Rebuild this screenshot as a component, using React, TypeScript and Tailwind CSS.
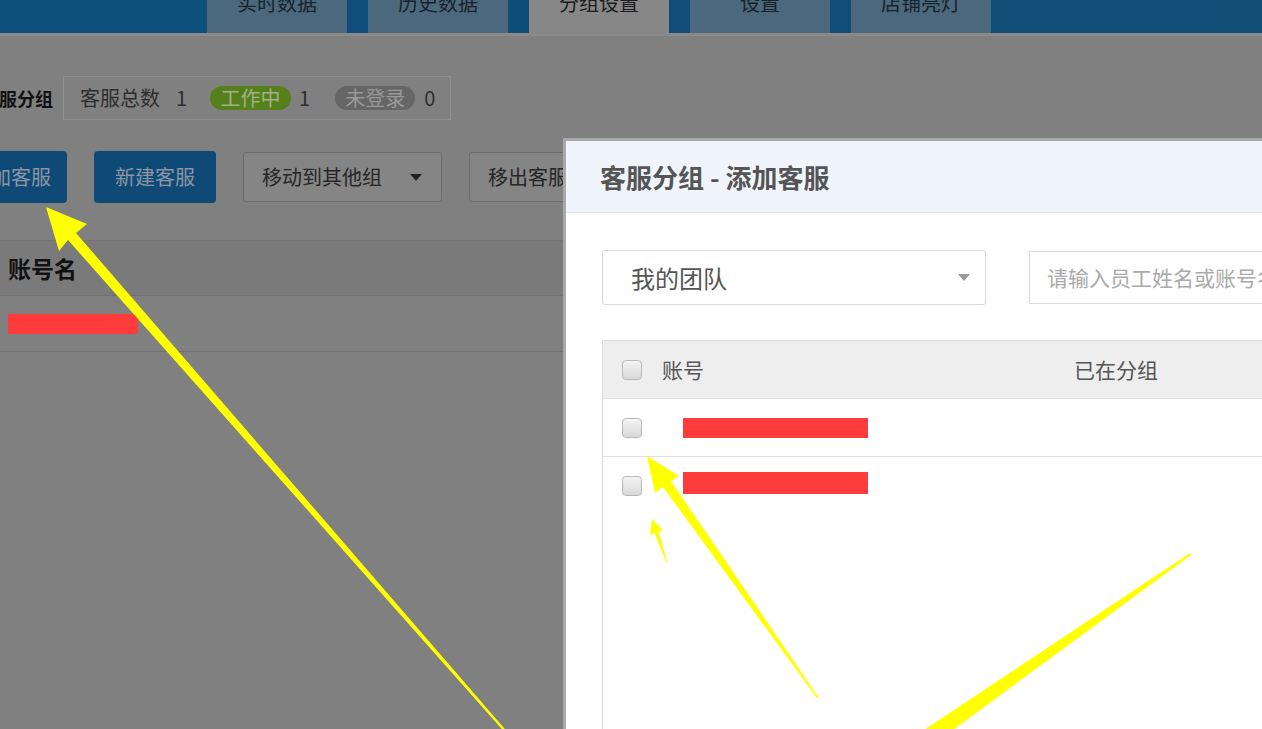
import type { ReactNode } from 'react';

const tabs = ['实时数据', '历史数据', '分组设置', '设置', '店铺亮灯'];

function Checkbox() {
  return (
    <span className="block w-[20px] h-[20px] rounded-[4px] border border-[#b9b9b9] bg-gradient-to-b from-[#f4f4f4] to-[#d9d9d9] shrink-0" />
  );
}

function Redact({ w, h }: { w: number; h: number }) {
  return <span className="block bg-[#ff3b3b]" style={{ width: w, height: h }} />;
}

function Badge({ children, tone }: { children: ReactNode; tone: 'green' | 'gray' }) {
  return (
    <span
      className={
        tone === 'green'
          ? 'inline-flex items-center justify-center w-[81px] h-[24px] rounded-full bg-[#56801c] text-[#9fb286]'
          : 'inline-flex items-center justify-center w-[80px] h-[24px] rounded-full bg-[#666666] text-[#999999]'
      }
    >
      {children}
    </span>
  );
}

function Arrows() {
  return (
    <svg className="absolute inset-0 pointer-events-none" width="1262" height="729" viewBox="0 0 1262 729">
      <g fill="#ffff00">
        {/* big arrow pointing at 添加客服 */}
        <polygon points="46,207 87,224 76,233 510,735 508,736 68,240 59,251" />
        {/* arrow pointing at first checkbox */}
        <polygon points="647,456 679,476 671,481 819,698 817,698 663,487 655,493" />
        {/* small arrow */}
        <polygon points="652,519 663,530 658.5,531.5 667.5,563 666.5,563 654.5,533 650,535" />
        {/* arrow from lower right */}
        <polygon points="1190,553 1191,555 942,738 912,738" />
      </g>
    </svg>
  );
}

export default function App() {
  return (
    <div className="relative w-[1262px] h-[729px] overflow-hidden bg-[#808080] font-['Noto_Sans_CJK_SC','Noto_Sans',sans-serif]">
      {/* top nav, scrolled so only the lower part shows */}
      <div className="h-[60px] -mt-[27px] flex bg-gradient-to-r from-[#0d4e7c] to-[#124d76]">
        <div className="w-[207px] shrink-0" />
        <div className="flex gap-[21px]">
          {tabs.map((t, i) => (
            <div
              key={t}
              className={
                i === 2
                  ? 'w-[140px] h-full flex items-center justify-center bg-[#878787] text-[20px] text-[#1c1c1c]'
                  : 'w-[140px] h-full flex items-center justify-center bg-[#4b687d] text-[20px] text-[#18222c]'
              }
            >
              {t}
            </div>
          ))}
        </div>
      </div>
      <div className="h-[3px] bg-[#8a8a8a]" />

      {/* background page */}
      <div className="-ml-[19px]">
        <div className="mt-[40px] flex items-center h-[44px]">
          <span className="text-[18px] font-bold text-[#111] w-[82px]">客服分组</span>
          <div className="h-[44px] w-[388px] border border-[#8f8f8f] flex items-center pl-[16px] text-[20px] text-[#2e2e2e]">
            <span>客服总数</span>
            <span className="ml-[16px]">1</span>
            <span className="ml-[23px]">
              <Badge tone="green">工作中</Badge>
            </span>
            <span className="ml-[8px]">1</span>
            <span className="ml-[25px]">
              <Badge tone="gray">未登录</Badge>
            </span>
            <span className="ml-[9px]">0</span>
          </div>
        </div>

        <div className="mt-[31px] flex items-center h-[52px] gap-[27px]">
          <div className="h-[52px] w-[86px] rounded-[4px] bg-[#0f4a77] flex items-center justify-end pr-[16px] text-[20px] text-[#8a96a2]">
            加客服
          </div>
          <div className="h-[52px] w-[122px] rounded-[4px] bg-[#0f4a77] flex items-center justify-center text-[20px] text-[#8a96a2]">
            新建客服
          </div>
          <div className="h-[50px] w-[199px] rounded-[3px] border border-[#6c6c6c] bg-[#858585] flex items-center pl-[18px] gap-[28px] text-[20px] text-[#262626]">
            移动到其他组
            <span className="w-0 h-0 border-l-[6px] border-r-[6px] border-t-[7px] border-l-transparent border-r-transparent border-t-[#222]" />
          </div>
          <div className="h-[50px] w-[140px] rounded-[3px] border border-[#6c6c6c] bg-[#858585] flex items-center pl-[18px] text-[20px] text-[#262626]">
            移出客服
          </div>
        </div>

        <div className="mt-[37px] w-[600px]">
          <div className="h-[55px] bg-[#7a7a7a] border-t border-[#747474] flex items-center pl-[27px] text-[23px] font-bold text-[#111]">
            账号名
          </div>
          <div className="h-[57px] border-t border-b border-[#707070] flex items-center pl-[27px]">
            <Redact w={130} h={20} />
          </div>
        </div>
      </div>

      {/* modal */}
      <div className="absolute left-[563px] top-[138px] w-[720px] h-[620px] bg-white border-l-[3px] border-t-[3px] border-[#a9a9a9]">
        <div className="h-[72px] bg-[#f0f5fc] border-b border-[#e2e6ec] flex items-center pl-[34px] text-[26px] font-bold text-[#555]">
          客服分组 - 添加客服
        </div>
        <div className="pl-[36px] pt-[37px] flex gap-[43px] items-center">
          <div className="w-[384px] h-[55px] shrink-0 rounded-[3px] border border-[#d9d9d9] flex items-center justify-between pl-[28px] pr-[15px] text-[24px] text-[#555]">
            我的团队
            <span className="w-0 h-0 border-l-[6px] border-r-[6px] border-t-[7px] border-l-transparent border-r-transparent border-t-[#999]" />
          </div>
          <div className="w-[400px] h-[53px] shrink-0 border border-[#dcdcdc] flex items-center pl-[17px] text-[21px] text-[#aaa] whitespace-nowrap">
            请输入员工姓名或账号名
          </div>
        </div>
        <div className="ml-[36px] mt-[35px] border-l border-t border-[#dcdcdc] h-[400px]">
          <div className="h-[58px] bg-[#eeeeee] border-b border-[#e0e0e0] flex items-center text-[21px] text-[#555]">
            <div className="w-[471px] flex items-center pl-[19px] gap-[20px]">
              <Checkbox />
              账号
            </div>
            <div>已在分组</div>
          </div>
          <div className="h-[58px] border-b border-[#e0e0e0] flex items-center pl-[19px] gap-[41px]">
            <Checkbox />
            <Redact w={185} h={20} />
          </div>
          <div className="h-[58px] flex items-center pl-[19px] gap-[41px]">
            <Checkbox />
            <span className="-mt-[6px]">
              <Redact w={185} h={22} />
            </span>
          </div>
        </div>
      </div>

      <Arrows />
    </div>
  );
}
